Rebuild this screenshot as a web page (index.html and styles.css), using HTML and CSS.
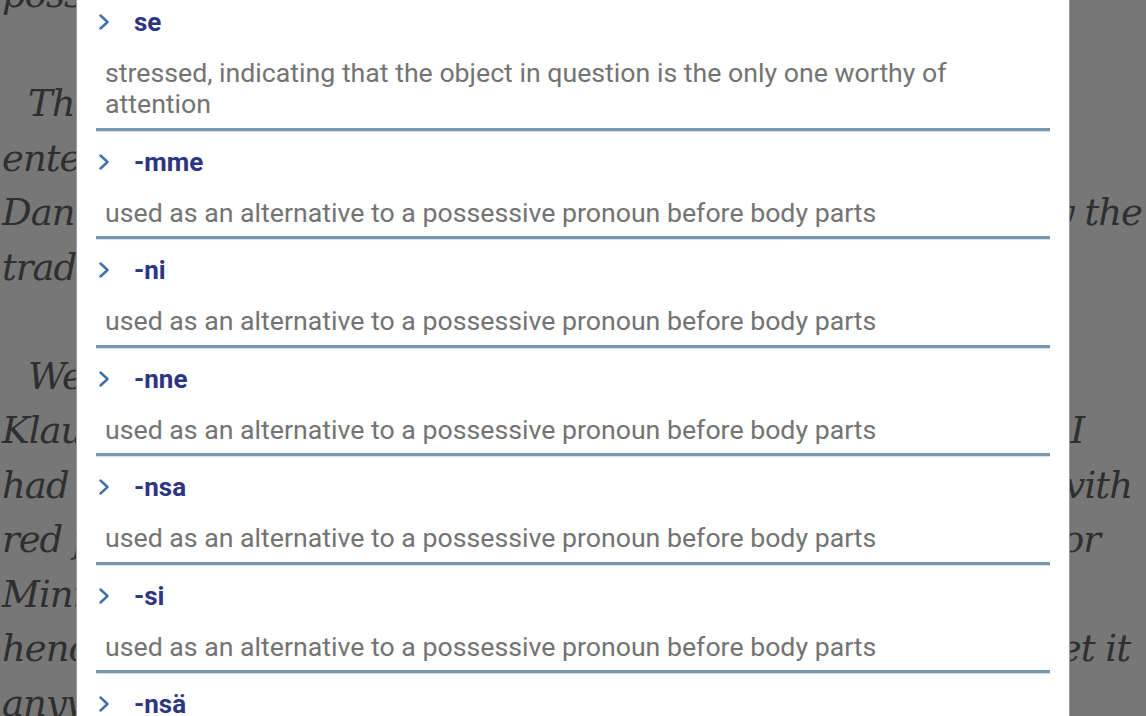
FILE: index.html
```html
<!DOCTYPE html>
<html lang="en">
<head>
<meta charset="utf-8">
<title>Dictionary</title>
<link rel="stylesheet" href="styles.css">
</head>
<body>
<div class="book">
  <div class="line"><span class="l">possible</span><span class="r"></span></div>
  <div class="line blank"></div>
  <div class="line indent"><span class="l">The</span><span class="r"></span></div>
  <div class="line"><span class="l">entered</span><span class="r"></span></div>
  <div class="line"><span class="l">Danish</span><span class="r r-the">y the</span></div>
  <div class="line"><span class="l">traditional</span><span class="r"></span></div>
  <div class="line blank"></div>
  <div class="line indent"><span class="l">We</span><span class="r"></span></div>
  <div class="line"><span class="l">Klaus</span><span class="r r-i">I</span></div>
  <div class="line"><span class="l">had</span><span class="r r-with">vith</span></div>
  <div class="line"><span class="l">red flag</span><span class="r r-for">or</span></div>
  <div class="line"><span class="l">Minnie</span><span class="r"></span></div>
  <div class="line"><span class="l">hence</span><span class="r r-get">et it</span></div>
  <div class="line"><span class="l">anyway</span><span class="r"></span></div>
</div>

<div class="dialog">
  <div class="list">
    <div class="entry">
      <div class="head">
        <svg class="chev" width="12" height="16" viewBox="0 0 12 16"><path d="M2.5 1.5 L9.5 8 L2.5 14.5" fill="none" stroke="#3f70a8" stroke-width="2.4" stroke-linecap="round" stroke-linejoin="round"/></svg>
        <span class="term">se</span>
      </div>
      <div class="def">stressed, indicating that the object in question is the only one worthy of attention</div>
    </div>
    <div class="entry">
      <div class="head">
        <svg class="chev" width="12" height="16" viewBox="0 0 12 16"><path d="M2.5 1.5 L9.5 8 L2.5 14.5" fill="none" stroke="#3f70a8" stroke-width="2.4" stroke-linecap="round" stroke-linejoin="round"/></svg>
        <span class="term">-mme</span>
      </div>
      <div class="def">used as an alternative to a possessive pronoun before body parts</div>
    </div>
    <div class="entry">
      <div class="head">
        <svg class="chev" width="12" height="16" viewBox="0 0 12 16"><path d="M2.5 1.5 L9.5 8 L2.5 14.5" fill="none" stroke="#3f70a8" stroke-width="2.4" stroke-linecap="round" stroke-linejoin="round"/></svg>
        <span class="term">-ni</span>
      </div>
      <div class="def">used as an alternative to a possessive pronoun before body parts</div>
    </div>
    <div class="entry">
      <div class="head">
        <svg class="chev" width="12" height="16" viewBox="0 0 12 16"><path d="M2.5 1.5 L9.5 8 L2.5 14.5" fill="none" stroke="#3f70a8" stroke-width="2.4" stroke-linecap="round" stroke-linejoin="round"/></svg>
        <span class="term">-nne</span>
      </div>
      <div class="def">used as an alternative to a possessive pronoun before body parts</div>
    </div>
    <div class="entry">
      <div class="head">
        <svg class="chev" width="12" height="16" viewBox="0 0 12 16"><path d="M2.5 1.5 L9.5 8 L2.5 14.5" fill="none" stroke="#3f70a8" stroke-width="2.4" stroke-linecap="round" stroke-linejoin="round"/></svg>
        <span class="term">-nsa</span>
      </div>
      <div class="def">used as an alternative to a possessive pronoun before body parts</div>
    </div>
    <div class="entry">
      <div class="head">
        <svg class="chev" width="12" height="16" viewBox="0 0 12 16"><path d="M2.5 1.5 L9.5 8 L2.5 14.5" fill="none" stroke="#3f70a8" stroke-width="2.4" stroke-linecap="round" stroke-linejoin="round"/></svg>
        <span class="term">-si</span>
      </div>
      <div class="def">used as an alternative to a possessive pronoun before body parts</div>
    </div>
    <div class="entry">
      <div class="head">
        <svg class="chev" width="12" height="16" viewBox="0 0 12 16"><path d="M2.5 1.5 L9.5 8 L2.5 14.5" fill="none" stroke="#3f70a8" stroke-width="2.4" stroke-linecap="round" stroke-linejoin="round"/></svg>
        <span class="term">-nsä</span>
      </div>
    </div>
  </div>
</div>
</body>
</html>
```

FILE: styles.css
```css
html, body {
  margin: 0;
  padding: 0;
  width: 1146px;
  height: 716px;
  overflow: hidden;
  background: #777777;
}

.book {
  margin-top: -32px;
  font-family: "DejaVu Serif", "Liberation Serif", serif;
  font-style: italic;
  font-size: 37px;
  line-height: 54.5px;
  color: #2f2f2f;
  letter-spacing: -1px;
}

.line {
  display: flex;
  justify-content: space-between;
  height: 54.5px;
  white-space: nowrap;
}

.l {
  width: 75px;
  padding-left: 2px;
  overflow: hidden;
  box-sizing: border-box;
  width: 77px;
}

.line.indent .l {
  padding-left: 28px;
}

.r { padding-right: 4px; }
.r-the { padding-right: 4px; }
.r-i { padding-right: 62px; }
.r-with { padding-right: 14px; }
.r-for { padding-right: 46px; }
.r-get { padding-right: 16px; }

.dialog {
  position: absolute;
  top: 0;
  left: 77px;
  width: 992px;
  height: 716px;
  background: #ffffff;
  box-shadow: 0 0 0 1px #9a9a9a;
  overflow: hidden;
}

.list {
  margin-top: -9px;
  padding: 0 19px;
}

.entry {
  border-bottom: 3px solid #7797b0;
  box-shadow: 0 1px 0 #d3e1ea;
}

.head {
  display: flex;
  align-items: center;
  height: 30px;
  margin-top: 16px;
}

.chev {
  margin-left: 2px;
  flex: none;
}

.term {
  margin-left: 24px;
  font-family: Roboto, "Liberation Sans", sans-serif;
  font-weight: 700;
  font-size: 26px;
  color: #2d3582;
}

.def {
  padding: 21px 0 7.5px 9px;
  font-family: Roboto, "Liberation Sans", sans-serif;
  font-size: 26.7px;
  line-height: 31px;
  color: #737373;
}
```
